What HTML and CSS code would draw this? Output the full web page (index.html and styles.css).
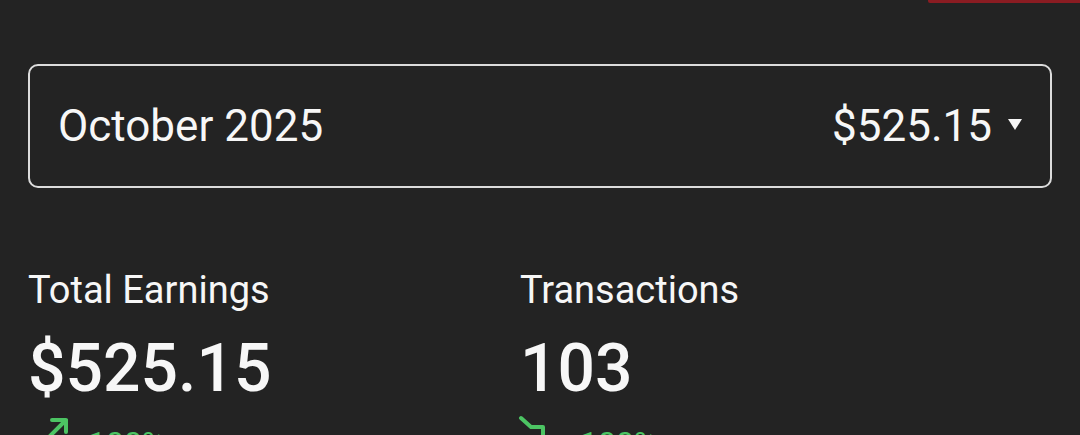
FILE: index.html
```html
<!DOCTYPE html>
<html>
<head>
<meta charset="utf-8">
<link rel="stylesheet" href="styles.css">
</head>
<body>
<div class="topbar"><div class="topbar-btn"></div></div>
<main class="page">
  <div class="month-select">
    <span class="month">October 2025</span>
    <span class="month-total">$525.15<span class="caret"></span></span>
  </div>
  <div class="stats">
    <div class="stat">
      <div class="stat-label">Total Earnings</div>
      <div class="stat-value">$525.15</div>
      <div class="trend trend-up">
        <svg class="trend-icon" width="26" height="26" viewBox="0 0 26 26"><path d="M8 5H22V17M22 5L4 23" fill="none" stroke="#4cc463" stroke-width="4" stroke-linecap="round" stroke-linejoin="round"/></svg>
        <span class="trend-text">100%</span>
      </div>
    </div>
    <div class="stat">
      <div class="stat-label">Transactions</div>
      <div class="stat-value">103</div>
      <div class="trend trend-down">
        <svg class="trend-icon" width="34" height="34" viewBox="0 0 34 34"><path d="M5 5L15 14H27V32" fill="none" stroke="#4cc463" stroke-width="4" stroke-linecap="round" stroke-linejoin="round"/></svg>
        <span class="trend-text">100%</span>
      </div>
    </div>
  </div>
</main>
</body>
</html>
```
FILE: styles.css
```css
html, body {
  margin: 0;
  padding: 0;
  background: #232323;
  color: #f7f7f7;
  font-family: Roboto, "Noto Sans", sans-serif;
  overflow: hidden;
  height: 435px;
}
.topbar {
  display: flex;
  justify-content: flex-end;
  height: 3px;
}
.topbar-btn {
  width: 152px;
  height: 3px;
  background: #8a1c22;
  border-bottom-left-radius: 2px;
}
.page {
  padding: 61px 28px 0 28px;
}
.month-select {
  box-sizing: border-box;
  height: 124px;
  border: 2px solid #dcdcdc;
  border-radius: 10px;
  display: flex;
  align-items: center;
  justify-content: space-between;
  padding: 0 28px 0 28px;
}
.month, .month-total {
  font-size: 44px;
  line-height: 52px;
}
.month-total {
  display: flex;
  align-items: center;
}
.caret {
  width: 0;
  height: 0;
  border-left: 7px solid transparent;
  border-right: 7px solid transparent;
  border-top: 11px solid #f7f7f7;
  margin-left: 16px;
  margin-top: -4px;
}
.stats {
  display: grid;
  grid-template-columns: 492px 1fr;
  margin-top: 79px;
}
.stat-label {
  font-size: 38px;
  line-height: 46px;
}
.stat-value {
  font-size: 66px;
  font-weight: 500;
  line-height: 80px;
  margin-top: 16px;
}
.trend {
  display: flex;
  align-items: flex-start;
  color: #4cc463;
  height: 40px;
}
.trend-icon {
  display: block;
  flex: none;
}
.trend-up .trend-icon {
  margin-left: 16px;
  margin-top: 6px;
}
.trend-up .trend-text {
  margin-left: 18px;
}
.trend-down .trend-icon {
  margin-left: -4px;
  margin-top: 4px;
}
.trend-down .trend-text {
  margin-left: 30px;
}
.trend-text {
  font-size: 32px;
  line-height: 32px;
  margin-top: 18px;
}
```
